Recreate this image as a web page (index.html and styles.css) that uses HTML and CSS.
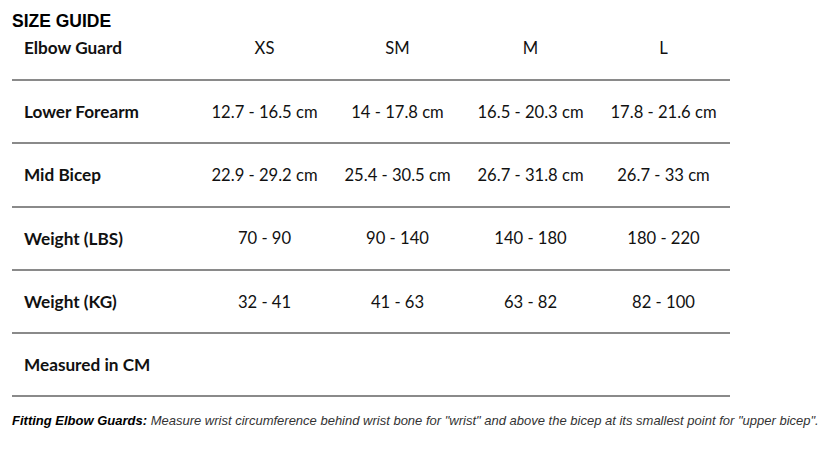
FILE: index.html
```html
<!DOCTYPE html>
<html lang="en">
<head>
    <meta charset="UTF-8">
    <title>Size Guide</title>
    <link rel="stylesheet" href="styles.css">
</head>
<body>
    <div class="guide">
        <h2 class="title">SIZE GUIDE</h2>
        <table class="sizes">
            <tr class="head">
                <td class="label">Elbow Guard</td>
                <td>XS</td>
                <td>SM</td>
                <td>M</td>
                <td>L</td>
            </tr>
            <tr>
                <td class="label">Lower Forearm</td>
                <td>12.7 - 16.5 cm</td>
                <td>14 - 17.8 cm</td>
                <td>16.5 - 20.3 cm</td>
                <td>17.8 - 21.6 cm</td>
            </tr>
            <tr>
                <td class="label">Mid Bicep</td>
                <td>22.9 - 29.2 cm</td>
                <td>25.4 - 30.5 cm</td>
                <td>26.7 - 31.8 cm</td>
                <td>26.7 - 33 cm</td>
            </tr>
            <tr>
                <td class="label">Weight (LBS)</td>
                <td>70 - 90</td>
                <td>90 - 140</td>
                <td>140 - 180</td>
                <td>180 - 220</td>
            </tr>
            <tr>
                <td class="label">Weight (KG)</td>
                <td>32 - 41</td>
                <td>41 - 63</td>
                <td>63 - 82</td>
                <td>82 - 100</td>
            </tr>
            <tr>
                <td class="label">Measured in CM</td>
                <td></td>
                <td></td>
                <td></td>
                <td></td>
            </tr>
        </table>
        <p class="note"><b>Fitting Elbow Guards:</b> Measure wrist circumference behind wrist bone for "wrist" and above the bicep at its smallest point for "upper bicep".</p>
    </div>
</body>
</html>
```

FILE: styles.css
```css
body{
    margin: 0;
    background-color: #ffffff;
    color: #111111;
}
.guide{
    padding: 0 12px;
}
/*Titulo de la guia*/
.title{
    margin: 0;
    padding-top: 11px;
    height: 21px;
    line-height: 21px;
    font-family: "Liberation Sans", Arial, sans-serif;
    font-size: 17.5px;
    font-weight: bold;
    color: #000000;
}
.sizes{
    width: 718px;
    border-collapse: collapse;
    font-family: Lato, "Liberation Sans", sans-serif;
    font-size: 16.6px;
    color: #111111;
}
.sizes td{
    width: 133px;
    height: 61.3px;
    padding: 0;
    text-align: center;
    vertical-align: middle;
    border-bottom: 2px solid #8a8a8a;
}
.sizes td.label{
    width: 174px;
    padding-left: 12px;
    text-align: left;
    font-size: 17.2px;
    font-weight: bold;
}
.sizes .head td{
    height: 20px;
    padding-top: 6px;
    padding-bottom: 21px;
    line-height: 20px;
}
.note{
    margin: 16px 0 0 0;
    font-family: "Liberation Sans", Arial, sans-serif;
    font-size: 13px;
    font-style: italic;
    color: #333333;
}
.note b{
    color: #000000;
}
```
